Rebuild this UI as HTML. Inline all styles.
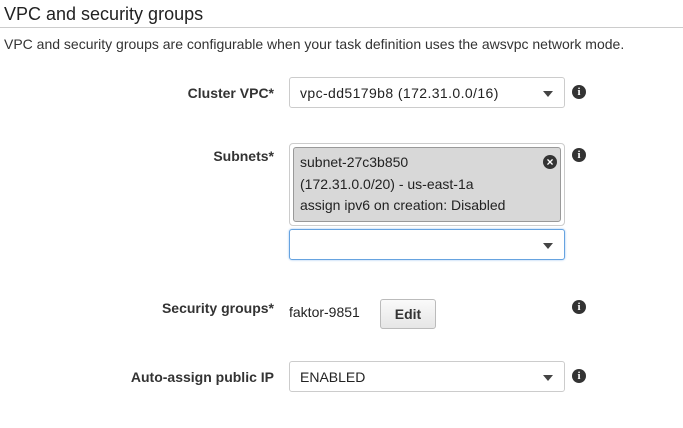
<!DOCTYPE html>
<html><head><meta charset="utf-8"><style>
*{box-sizing:border-box;margin:0;padding:0}
body{width:683px;height:428px;background:#fff;font-family:"Liberation Sans",Arial,sans-serif;color:#333;position:relative;overflow:hidden}
.a{position:absolute}
.lbl{position:absolute;right:409px;font-weight:bold;font-size:14px;color:#333;white-space:nowrap}
.sel{position:absolute;left:289px;width:276px;height:31px;border:1px solid #ccc;border-radius:3px;background:#fff;font-size:14px;padding:7px 10px;color:#222}
.caret{position:absolute;right:11px;top:13px;width:0;height:0;border-left:5px solid transparent;border-right:5px solid transparent;border-top:6px solid #444}
.info{position:absolute;width:14px;height:14px;border-radius:50%;background:#333;color:#fff;font:bold 11px/14px "Liberation Serif",serif;text-align:center}
</style></head><body>
<div class="a" style="left:4px;top:4px;font-size:18px;color:#222">VPC and security groups</div>
<div class="a" style="left:0;top:27px;width:683px;height:1px;background:#ccc"></div>
<div class="a" style="left:4px;top:36px;font-size:14px;color:#333">VPC and security groups are configurable when your task definition uses the awsvpc network mode.</div>

<div class="lbl" style="top:85px">Cluster VPC*</div>
<div class="sel" style="top:77px;letter-spacing:0.4px">vpc-dd5179b8 (172.31.0.0/16)<div class="caret"></div></div>
<div class="info" style="left:572px;top:85px">i</div>

<div class="lbl" style="top:148px">Subnets*</div>
<div class="a" style="left:289px;top:143px;width:276px;height:83px;border:1px solid #ccc;border-radius:4px;background:#fff"></div>
<div class="a" style="left:293px;top:147px;width:268px;height:75px;border:1px solid #999;border-radius:3px;background:#d8d8d8;font-size:14px;line-height:21.5px;padding:4px 6px;color:#222">subnet-27c3b850<br>(172.31.0.0/20) - us-east-1a<br>assign ipv6 on creation: Disabled</div>
<div class="a" style="left:543px;top:155px;width:14px;height:14px;border-radius:50%;background:#333;color:#fff;font:bold 12px/14px sans-serif;text-align:center">×</div>
<div class="info" style="left:572px;top:148px">i</div>
<div class="sel" style="top:229px;border-color:#66a3e0;box-shadow:0 0 2px #9cc3ee"><div class="caret"></div></div>

<div class="lbl" style="top:300px">Security groups*</div>
<div class="a" style="left:289px;top:304px;font-size:14px;color:#222">faktor-9851</div>
<div class="a" style="left:380px;top:299px;width:56px;height:30px;border:1px solid #bbb;border-radius:3px;background:linear-gradient(#fafafa,#e6e6e6);font-weight:bold;font-size:14px;text-align:center;line-height:28px;color:#333">Edit</div>
<div class="info" style="left:572px;top:300px">i</div>

<div class="lbl" style="top:369px">Auto-assign public IP</div>
<div class="sel" style="top:361px">ENABLED<div class="caret"></div></div>
<div class="info" style="left:572px;top:369px">i</div>
</body></html>
